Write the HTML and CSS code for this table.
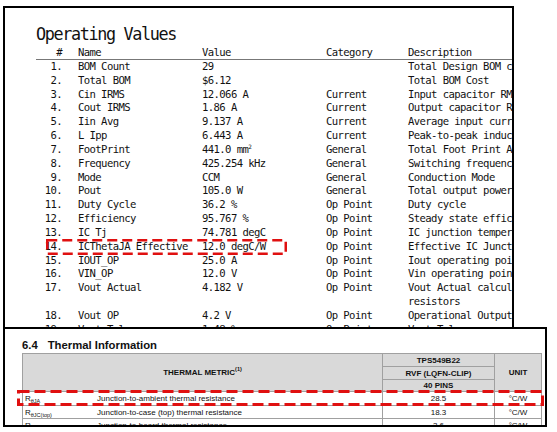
FILE: index.html
```html
<!DOCTYPE html>
<html>
<head>
<meta charset="utf-8">
<link rel="stylesheet" href="styles.css">
</head>
<body>
<div class="panel-top">
  <div class="title">Operating Values</div>
  <div class="grid head">
    <div class="num">#</div><div>Name</div><div>Value</div><div>Category</div><div>Description</div>
  </div>
  <div class="rows">
    <div class="grid"><div class="num">1.</div><div>BOM Count</div><div>29</div><div></div><div>Total Design BOM cost</div></div>
    <div class="grid"><div class="num">2.</div><div>Total BOM</div><div>$6.12</div><div></div><div>Total BOM Cost</div></div>
    <div class="grid"><div class="num">3.</div><div>Cin IRMS</div><div>12.066 A</div><div>Current</div><div>Input capacitor RMS ripple current</div></div>
    <div class="grid"><div class="num">4.</div><div>Cout IRMS</div><div>1.86 A</div><div>Current</div><div>Output capacitor RMS ripple current</div></div>
    <div class="grid"><div class="num">5.</div><div>Iin Avg</div><div>9.137 A</div><div>Current</div><div>Average input current</div></div>
    <div class="grid"><div class="num">6.</div><div>L Ipp</div><div>6.443 A</div><div>Current</div><div>Peak-to-peak inductor ripple current</div></div>
    <div class="grid"><div class="num">7.</div><div>FootPrint</div><div>441.0 mm<sup>2</sup></div><div>General</div><div>Total Foot Print Area of BOM components</div></div>
    <div class="grid"><div class="num">8.</div><div>Frequency</div><div>425.254 kHz</div><div>General</div><div>Switching frequency</div></div>
    <div class="grid"><div class="num">9.</div><div>Mode</div><div>CCM</div><div>General</div><div>Conduction Mode</div></div>
    <div class="grid"><div class="num">10.</div><div>Pout</div><div>105.0 W</div><div>General</div><div>Total output power</div></div>
    <div class="grid"><div class="num">11.</div><div>Duty Cycle</div><div>36.2 %</div><div>Op Point</div><div>Duty cycle</div></div>
    <div class="grid"><div class="num">12.</div><div>Efficiency</div><div>95.767 %</div><div>Op Point</div><div>Steady state efficiency</div></div>
    <div class="grid"><div class="num">13.</div><div>IC Tj</div><div>74.781 degC</div><div>Op Point</div><div>IC junction temperature</div></div>
    <div class="grid"><div class="num">14.</div><div>ICThetaJA Effective</div><div>12.0 degC/W</div><div>Op Point</div><div>Effective IC Junction-to-Ambient Thermal Resistance</div></div>
    <div class="grid"><div class="num">15.</div><div>IOUT_OP</div><div>25.0 A</div><div>Op Point</div><div>Iout operating point</div></div>
    <div class="grid"><div class="num">16.</div><div>VIN_OP</div><div>12.0 V</div><div>Op Point</div><div>Vin operating point</div></div>
    <div class="grid"><div class="num">17.</div><div>Vout Actual</div><div>4.182 V</div><div>Op Point</div><div><div>Vout Actual calculated using</div><div>resistors</div></div></div>
    <div class="grid"><div class="num">18.</div><div>Vout OP</div><div>4.2 V</div><div>Op Point</div><div>Operational Output Voltage</div></div>
    <div class="grid"><div class="num">19.</div><div>Vout Tol</div><div>1.48 %</div><div>Op Point</div><div>Vout Tolerance</div></div>
  </div>
  <svg class="mark mark-top" width="241" height="16" viewBox="0 0 241 16"><rect x="1.25" y="1.25" width="238.5" height="13.5" fill="none" stroke="#e01010" stroke-width="2.5" stroke-dasharray="10 5"/></svg>
</div>
<div class="panel-bottom">
  <div class="sec-title"><span class="sec-num">6.4</span><span>Thermal Information</span></div>
  <table class="thermal">
    <colgroup><col class="c1"><col class="c2"><col class="c3"></colgroup>
    <tr class="h1"><th rowspan="3">THERMAL METRIC<sup>(1)</sup></th><th>TPS549B22</th><th rowspan="3">UNIT</th></tr>
    <tr class="h2"><th>RVF (LQFN-CLIP)</th></tr>
    <tr class="h3"><th>40 PINS</th></tr>
    <tr class="d1"><td><span class="sym">R<sub>θJA</sub></span><span class="desc">Junction-to-ambient thermal resistance</span></td><td class="ctr">28.5</td><td class="ctr">°C/W</td></tr>
    <tr class="d2"><td><span class="sym">R<sub>θJC(top)</sub></span><span class="desc">Junction-to-case (top) thermal resistance</span></td><td class="ctr">18.3</td><td class="ctr">°C/W</td></tr>
    <tr class="d3"><td><span class="sym">R<sub>θJB</sub></span><span class="desc">Junction-to-board thermal resistance</span></td><td class="ctr">3.6</td><td class="ctr">°C/W</td></tr>
  </table>
  <svg class="mark mark-bottom" width="527" height="16" viewBox="0 0 527 16"><rect x="1.5" y="1.5" width="524" height="13" fill="none" stroke="#e01010" stroke-width="3" stroke-dasharray="11 5"/></svg>
</div>
</body>
</html>
```

FILE: styles.css
```css
html, body {
  margin: 0;
  padding: 0;
  background: #ffffff;
}

body {
  width: 557px;
  height: 432px;
  overflow: hidden;
}

.panel-top {
  position: relative;
  box-sizing: border-box;
  margin: 6px 0 0 3px;
  width: 511px;
  height: 321px;
  border: 2px solid #000;
  border-bottom: none;
  overflow: hidden;
  padding-left: 31px;
  font-family: "DejaVu Sans Mono", monospace;
  color: #111;
  white-space: nowrap;
}

.title {
  margin-top: 16px;
  height: 21px;
  line-height: 21px;
  font-size: 16.8px;
  letter-spacing: -1.36px;
}

.grid {
  display: grid;
  grid-template-columns: 42px 124px 124px 82px 1fr;
  font-size: 10.6px;
  letter-spacing: -0.6px;
  line-height: 13.83px;
}

.grid .num {
  text-align: right;
  padding-right: 16px;
}

.head {
  line-height: 14px;
  border-bottom: 1px solid #777;
}

.grid sup {
  font-size: 6px;
  line-height: 0;
  vertical-align: 4px;
}

.mark {
  position: absolute;
  display: block;
}

.mark-top {
  left: 41px;
  top: 231px;
}

.panel-bottom {
  position: relative;
  box-sizing: border-box;
  margin-left: 3px;
  width: 544px;
  height: 100px;
  border: 2px solid #000;
  overflow: hidden;
  padding-left: 17px;
  font-family: "Liberation Sans", Arial, sans-serif;
  color: #111;
}

.sec-title {
  margin-top: 9px;
  height: 15px;
  line-height: 15px;
  font-size: 11.3px;
  font-weight: bold;
  display: flex;
  gap: 10px;
}

.thermal {
  border-collapse: collapse;
  table-layout: fixed;
  width: 519px;
  font-size: 8px;
}

.thermal .c1 { width: 360px; }
.thermal .c2 { width: 112px; }
.thermal .c3 { width: 47px; }

.thermal th,
.thermal td {
  border: 1px solid #a0a0a0;
  padding: 0;
  white-space: nowrap;
  overflow: hidden;
}

.thermal th {
  background: #d9d9d9;
  font-weight: bold;
  text-align: center;
}

.thermal th sup {
  font-size: 5.5px;
  vertical-align: 4px;
  line-height: 0;
}

.thermal .h1 th, .thermal .h2 th { height: 12px; }
.thermal .h3 th { height: 11px; }
.thermal .d1 td { height: 13px; }
.thermal .d2 td { height: 12px; }
.thermal .d3 td { height: 12px; }

.thermal td {
  padding-left: 2px;
}

.thermal td.ctr {
  text-align: center;
  padding-left: 0;
}

.sym {
  display: inline-block;
  width: 72px;
}

.sym sub {
  font-size: 5.5px;
  vertical-align: -2px;
  line-height: 0;
}

.mark-bottom {
  left: 12px;
  top: 61px;
}
```
